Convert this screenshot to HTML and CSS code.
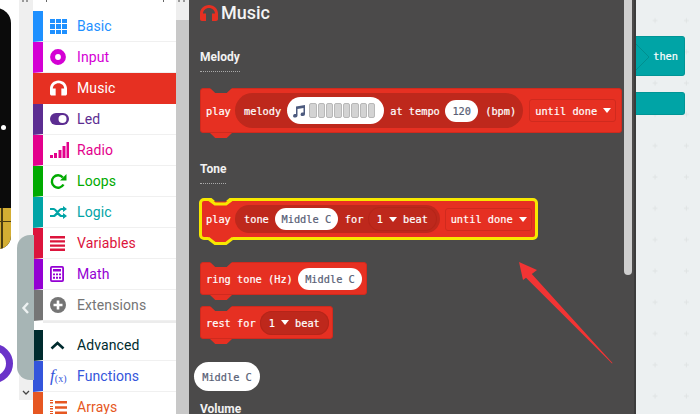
FILE: index.html
```html
<!DOCTYPE html>
<html lang="en">
<head>
<meta charset="utf-8">
<title>Music blocks</title>
<link rel="stylesheet" href="styles.css">
</head>
<body>
<div class="app">
  <div class="simulator">
    <div class="device"><div class="device-dot"></div><div class="device-gold"></div></div>
    <div class="ring"></div>
    <div class="strip"><svg class="strip-arrow-svg" viewBox="0 0 8 5" width="8" height="5"><path d="M1 1l3 3 3-3" fill="none" stroke="#444" stroke-width="1.3"/></svg></div>
    <div class="collapse"><svg viewBox="0 0 9 14" width="9" height="14"><path d="M7 2L2.5 7 7 12" fill="none" stroke="#eef2f2" stroke-width="2.4"/></svg></div>
  </div>
  <nav class="toolbox">
    <div class="toolbox-top"></div>
    <div class="cat c-basic"><span class="ico"><svg viewBox="0 0 17 15" width="17" height="15"><path fill="currentColor" d="M0 0h5v4H0zM6 0h5v4H6zM12 0h5v4h-5zM0 5h5v5H0zM6 5h5v5H6zM12 5h5v5h-5zM0 11h5v4H0zM6 11h5v4H6zM12 11h5v4h-5z"/></svg></span><span class="lbl">Basic</span></div>
    <div class="cat c-input"><span class="ico"><svg viewBox="0 0 16 16" width="16" height="16"><circle cx="8" cy="8" r="5.4" fill="none" stroke="currentColor" stroke-width="5"/></svg></span><span class="lbl">Input</span></div>
    <div class="cat c-music"><span class="ico"><svg viewBox="0 0 18 16" width="17" height="16"><use href="#phones"/></svg></span><span class="lbl">Music</span></div>
    <div class="cat c-led"><span class="ico"><svg viewBox="0 0 19 12" width="19" height="12"><rect width="19" height="12" rx="6" fill="currentColor"/><circle cx="12.5" cy="6" r="4" fill="#fff"/></svg></span><span class="lbl">Led</span></div>
    <div class="cat c-radio"><span class="ico"><svg viewBox="0 0 19 17" width="19" height="17"><path fill="currentColor" d="M0 13h3v3H0zM4 11h3v5H4zM8.500 8h3v8h-3zM12.500 4h3v12h-3zM16.500 0h2.500v16h-2.500z"/></svg></span><span class="lbl">Radio</span></div>
    <div class="cat c-loops"><span class="ico"><svg viewBox="0 0 17 17" width="17" height="17"><path fill="none" stroke="currentColor" stroke-width="2.400" d="M13.500 11.500a6.200 6.200 0 1 1-.7-7"/><path fill="currentColor" d="M16.500 1v6.500H10z"/></svg></span><span class="lbl">Loops</span></div>
    <div class="cat c-logic"><span class="ico"><svg viewBox="0 0 17 13" width="17" height="13"><path fill="none" stroke="currentColor" stroke-width="2.200" d="M0 3h3.500c3 0 5 7 8 7h2M0 10h3.500c3 0 5-7 8-7h2"/><path fill="currentColor" d="M13 0l4 3-4 3zM13 7l4 3-4 3z"/></svg></span><span class="lbl">Logic</span></div>
    <div class="cat c-variables"><span class="ico"><svg viewBox="0 0 15 15" width="15" height="15"><path fill="currentColor" d="M0 0h15v2.400H0zM0 4.200h15v2.400H0zM0 8.400h15v2.400H0zM0 12.600h15V15H0z"/></svg></span><span class="lbl">Variables</span></div>
    <div class="cat c-math"><span class="ico"><svg viewBox="0 0 14 16" width="14" height="16"><rect x=".9" y=".9" width="12.200" height="14.200" rx="1" fill="none" stroke="currentColor" stroke-width="1.800"/><path fill="currentColor" d="M3 3h8v2.500H3zM3 7.500h2v1.800H3zM6 7.500h2v1.800H6zM9 7.500h2v1.800H9zM3 10.800h2v2H3zM6 10.800h2v2H6zM9 10.800h2v2H9z"/></svg></span><span class="lbl">Math</span></div>
    <div class="cat c-ext"><span class="ico"><svg viewBox="0 0 16 16" width="16" height="16"><circle cx="8" cy="8" r="8" fill="currentColor"/><path fill="#fff" d="M6.700 3.500h2.600v3.200h3.200v2.600H9.300v3.200H6.700V9.300H3.500V6.700h3.200z"/></svg></span><span class="lbl">Extensions</span></div>
    <div class="gap"></div>
    <div class="cat c-adv"><span class="ico"><svg viewBox="0 0 15 9" width="15" height="9"><path d="M1.500 7.500L7.500 2l6 5.500" fill="none" stroke="currentColor" stroke-width="2.600"/></svg></span><span class="lbl">Advanced</span></div>
    <div class="cat c-func"><span class="ico fx"><i>f</i><small>(x)</small></span><span class="lbl">Functions</span></div>
    <div class="cat c-arr"><span class="ico"><svg viewBox="0 0 17 15" width="17" height="15"><path fill="currentColor" d="M5 1h12v2.400H5zM5 6.300h12v2.400H5zM5 11.600h12V14H5zM0 0h3v1H0zM0 2h3v1.600H0zM0 6h3v1H0zM0 8h3v1.400H0zM0 11h3v1H0zM0 13h3v1.500H0z"/></svg></span><span class="lbl">Arrays</span></div>
  </nav>
  <div class="toolbox-scroll"><div class="toolbox-scroll-top"></div></div>
  <main class="flyout">
    <div class="fly-title"><svg viewBox="0 0 18 16" width="18" height="16" class="title-ico"><use href="#phones"/></svg>Music</div>
    <h3 class="sec sec-melody"><span>Melody</span></h3>
    <div class="block b-melody">
      <span class="t">play</span>
      <span class="well"><span class="t">melody</span>
        <span class="pill melody"><svg viewBox="0 0 14 14" width="14" height="14"><path fill="#4c5a7e" d="M4 2.500L13 1v9.300a2.200 1.800 0 1 1-1.500-1.700V4L5.500 5v6.800a2.200 1.800 0 1 1-1.500-1.700z"/></svg><span class="cells"><b></b><b></b><b></b><b></b><b></b><b></b><b></b><b></b></span></span>
        <span class="t">at tempo</span><span class="pill num">120</span><span class="t">(bpm)</span></span>
      <span class="drop"><span class="t">until done</span><i class="tri"></i></span>
    </div>
    <h3 class="sec sec-tone"><span>Tone</span></h3>
    <div class="block b-tone">
      <svg class="tone-notch" viewBox="0 0 28 8" width="28" height="8"><path d="M0 1.500H2L8 6H19L25 1.500H28" fill="none" stroke="#f7e800" stroke-width="3"/><path d="M4.500 0L8.500 3.500H18.500L22.500 0Z" fill="#4b4a4a"/></svg>
      <span class="t">play</span>
      <span class="well"><span class="t">tone</span><span class="pill note">Middle C</span><span class="t">for</span><span class="well inner"><span class="t">1</span><i class="tri"></i><span class="t">beat</span></span></span>
      <span class="drop"><span class="t">until done</span><i class="tri"></i></span>
      <svg class="tone-tab" viewBox="0 0 28 8" width="28" height="8"><path d="M1 0L8 6H19L26 0Z" fill="#e63022"/><path d="M1 1L8 6.500H19L26 1" fill="none" stroke="#f7e800" stroke-width="3"/></svg>
    </div>
    <div class="block b-ring"><span class="t">ring tone (Hz)</span><span class="pill note">Middle C</span></div>
    <div class="block b-rest"><span class="t">rest for</span><span class="well inner"><span class="t">1</span><i class="tri"></i><span class="t">beat</span></span></div>
    <div class="loose"><span class="pill note big">Middle C</span></div>
    <h3 class="sec sec-vol"><span>Volume</span></h3>
    <svg class="arrow" viewBox="0 0 94 102" width="94" height="102"><path fill="#f23434" d="M0 0L18 8 12.800 12 93.500 101 93 101.500 7 15.800 4 18Z"/></svg>
    <div class="fly-scroll"></div>
  </main>
  <section class="workspace">
    <svg class="grid" width="64" height="414"><defs><pattern id="plus" x="0" y="0" width="31.3" height="31.3" patternUnits="userSpaceOnUse"><path d="M16.500 20.500h5M19 18v5" stroke="#dfe3e4" stroke-width="1" fill="none"/></pattern></defs><rect width="64" height="414" fill="url(#plus)"/></svg>
    <div class="ws-block ws-then"><svg class="notch" viewBox="0 0 14 40" width="14" height="40"><path d="M0 7l13 13L0 33" fill="none" stroke="#008f8f" stroke-width="1"/></svg><span class="t">then</span></div>
    <div class="ws-block ws-empty"></div>
  </section>
</div>
<svg class="defs" width="0" height="0"><defs><path id="phones" fill="currentColor" d="M9 0C4 0 0 3.800 0 8.600V14c0 1 .8 2 2 2h4V8.500H3C3 5.500 5.600 3 9 3s6 2.500 6 5.500h-3V16h4c1.200 0 2-1 2-2V8.600C18 3.800 14 0 9 0z"/></defs></svg>
</body>
</html>
```
FILE: styles.css
```css
* { box-sizing: border-box; }
html, body { margin: 0; height: 100%; }
body { width: 700px; height: 414px; overflow: hidden; background: #fff; font-family: "Roboto", "Liberation Sans", sans-serif; }
.app { display: flex; width: 700px; height: 414px; overflow: hidden; }
.defs { position: absolute; }

.simulator { position: relative; z-index: 1; width: 33px; flex: none; background: #fff; }
.device { position: absolute; left: -40px; top: 8px; width: 51px; height: 241px; background: #0b0b0b; border-radius: 0 15px 13px 0; overflow: hidden; }
.device-dot { position: absolute; left: 41px; top: 117px; width: 5px; height: 5px; border-radius: 50%; background: #fff; }
.device-gold { position: absolute; left: 0; right: 0; top: 200px; height: 41px; background-color: #d4ae33; background-image: linear-gradient(90deg, transparent 41px, #4a3c12 41px, #4a3c12 43px, transparent 43px), linear-gradient(transparent 13px, #4a3c12 13px, #4a3c12 14px, transparent 14px); }
.ring { position: absolute; left: -26px; top: 344px; width: 39px; height: 39px; border: 7px solid #6a33c9; border-radius: 50%; }
.strip { position: absolute; left: 19px; top: 0; bottom: 14px; width: 14px; background: #efefef; }
.strip::before { content: ""; position: absolute; left: 3px; top: 0; width: 2px; height: 2px; background: #999; box-shadow: 4px 0 0 #999; }
.strip-arrow-svg { position: absolute; left: 3px; bottom: 5px; }
.collapse { position: absolute; left: 17px; top: 235px; width: 17px; height: 145px; background: #a7b5b5; border-radius: 13px 0 0 13px; display: flex; align-items: center; justify-content: center; }

.toolbox { position: relative; width: 143px; flex: none; background: #fff; display: flex; flex-direction: column; overflow: hidden; }
.toolbox-top { height: 11px; flex: none; }
.toolbox-top::before { content: ""; position: absolute; left: 13px; top: 0; width: 1px; height: 2px; background: #666; box-shadow: 117px 0 0 #666; }
.cat { height: 31px; flex: none; display: flex; align-items: center; border-left: 10px solid; border-bottom: 1px solid #f0f0f0; font-size: 14px; letter-spacing: .1px; background: #fff; }
.ico { width: 27px; margin-left: 7px; flex: none; display: flex; align-items: center; }
.lbl { line-height: 1; }
.c-basic { color: #1e90ff; }
.c-input { color: #d400d4; }
.c-music { color: #fff; background: #e63022; border-left-color: #e63022; border-bottom-color: #e63022; }
.c-led { color: #5c2d91; }
.c-radio { color: #e3008c; }
.c-loops { color: #00aa00; }
.c-logic { color: #00a4a6; }
.c-variables { color: #dc143c; }
.c-math { color: #9400d3; }
.c-ext { color: #757575; }
.gap { height: 9px; flex: none; margin-left: 10px; border-top: 2px solid #ececec; margin-top: 0; }
.c-adv { color: #002b2e; }
.c-func { color: #3455db; }
.c-arr { color: #e65722; }
.fx { font-family: "Liberation Serif", serif; font-size: 17px; }
.fx small { font-size: 10px; margin-top: 5px; }

.toolbox-scroll { width: 13px; flex: none; background: #c8c8c8; }
.toolbox-scroll-top { position: relative; height: 20px; background: #eeeeee; }
.toolbox-scroll-top::before { content: ""; position: absolute; left: 2px; top: 0; width: 2px; height: 2px; background: #999; box-shadow: 5px 0 0 #999; }

.flyout { position: relative; width: 447px; flex: none; background: #4b4a4a; color: #fff; border-right: 2px solid #3c3c3c; overflow: hidden; padding: 1px 0 0 11px; }
.fly-title { display: flex; align-items: center; gap: 3px; height: 23px; font-size: 18px; font-weight: 500; color: #f4f4f4; }
.title-ico { color: #e63022; }
.sec { margin: 0; font-size: 12px; font-weight: 700; color: #f2f2f2; line-height: 14px; }
.sec span { display: inline-block; padding-bottom: 7px; border-bottom: 1px dotted #aaa; vertical-align: top; }
.sec-melody { margin-top: 26px; }
.sec-tone { margin-top: 29px; }
.sec-vol { margin-top: 11px; }

.block { display: flex; align-items: center; background: #e63022; border: 1px solid #cf2a1e; border-radius: 3px; font-family: "DejaVu Sans Mono", "Liberation Mono", monospace; font-size: 10.300px; -webkit-text-stroke: .2px; position: relative; height: 33px; padding: 0 5px; gap: 4.200px; color: #fff; }
.block::before { content: ""; position: absolute; left: 9px; top: -1px; width: 22px; height: 5px; background: #4b4a4a; clip-path: polygon(0 0, 100% 0, 76% 100%, 24% 100%); }
.block::after { content: ""; position: absolute; left: 9px; bottom: -6px; width: 22px; height: 5px; background: #e63022; clip-path: polygon(0 0, 100% 0, 76% 100%, 24% 100%); }
.t { white-space: pre; flex: none; }
.well { display: inline-flex; flex: none; align-items: center; gap: 6px; background: #be281c; border-radius: 17px; height: 28px; padding: 0 2px 0 9px; }
.well.inner { box-shadow: inset 0 0 0 1px #b52519; gap: 6px; height: 24px; padding: 0 9px; border-radius: 12px; }
.pill { display: inline-flex; flex: none; align-items: center; justify-content: center; background: #fff; color: #575e75; border-radius: 12px; height: 22px; }
.drop { display: inline-flex; flex: none; align-items: center; gap: 6px; height: 23px; padding: 0 4px 0 5px; border: 1px solid #d02a1e; border-radius: 3px; }
.tri { display: inline-block; flex: none; width: 0; height: 0; border-left: 4px solid transparent; border-right: 4px solid transparent; border-top: 5px solid #fff; }

.b-melody { width: 421.500px; margin-top: 16px; height: 45px; }
.b-melody .well { height: 35px; padding: 0 7px 0 9px; border-radius: 18px; margin-right: 1.800px; }
.pill.melody { width: 97px; height: 27px; border-radius: 14px; justify-content: flex-start; padding-left: 5px; }
.cells { display: flex; gap: 1px; margin-left: 3px; }
.cells b { width: 7.400px; height: 15px; background: #d3d3d3; border: 1px solid #b8b8b8; border-radius: 2px; display: block; }
.pill.num { width: 33px; margin-left: -.6px; margin-right: 1px; }

.b-tone { width: 339px; height: 42px; margin: 14px 0 0 -1px; border: 3px solid #f7e800; border-radius: 5px; padding: 0 4px; }
.b-tone::before, .b-tone::after { display: none; }
.tone-notch { position: absolute; left: 5px; top: -3px; }
.tone-tab { position: absolute; left: 5px; bottom: -8px; }
.b-tone .well { margin-right: .8px; }
.b-tone .well .t:nth-of-type(3) { margin-left: 1px; margin-right: -1.600px; }
.b-tone .pill.note { width: 63px; }

.b-ring { width: 167px; margin-top: 22px; gap: 5.200px; }
.b-ring .pill.note { width: 64px; }
.b-rest { width: 133px; margin-top: 11px; }
.loose { display: flex; margin: 23px 0 0 -6px; font-family: "DejaVu Sans Mono", monospace; font-size: 10.300px; -webkit-text-stroke: .2px; }
.pill.big { width: 66px; height: 29px; border-radius: 15px; }

.arrow { position: absolute; left: 330px; top: 262px; }
.fly-scroll { position: absolute; left: 435px; top: 0; width: 8px; height: 275px; background: #cfcfcf; border-radius: 0 0 4px 4px; }

.workspace { flex: 1; position: relative; background-color: #ecf0f1; }
.grid { position: absolute; left: 0; top: 0; }
.ws-block { background: #00a4a6; border: 1px solid #009596; border-left: 0; border-radius: 0 3px 3px 0; position: absolute; left: 0; width: 49px; color: #fff; }
.ws-then { top: 36px; height: 40px; display: flex; align-items: center; justify-content: flex-end; padding-right: 6px; font-family: "DejaVu Sans Mono", monospace; font-size: 10.300px; -webkit-text-stroke: .2px; }
.notch { position: absolute; left: 0; top: 0; }
.ws-empty { top: 92px; height: 23px; }
```
